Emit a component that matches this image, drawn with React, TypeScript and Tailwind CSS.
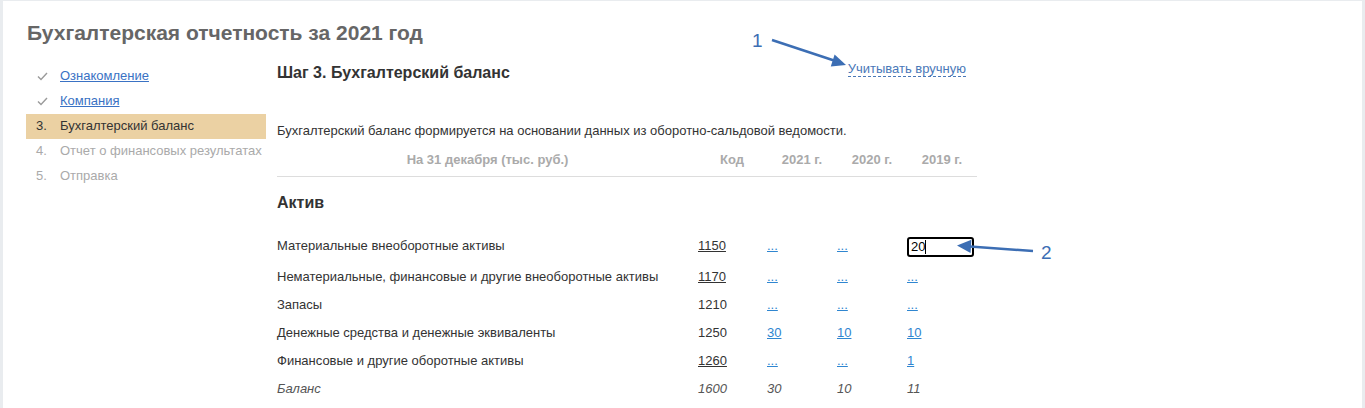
import React from "react";

const F = { fontFamily: '"Liberation Sans", Arial, Helvetica, sans-serif' };

function Check() {
  return (
    <svg width="11" height="9" viewBox="0 0 11 9" className="block">
      <polyline points="1,4.5 4,7.5 10,1" fill="none" stroke="#9a9a9a" strokeWidth="1.4" />
    </svg>
  );
}

type Cell = { t: string; link?: boolean; input?: boolean };
type Row = { label: string; code: string; codeU?: boolean; vals: Cell[]; italic?: boolean; h: string };

const rows: Row[] = [
  { label: "Материальные внеоборотные активы", code: "1150", codeU: true, vals: [{ t: "...", link: true }, { t: "...", link: true }, { t: "20", input: true }], h: "h-[34px]" },
  { label: "Нематериальные, финансовые и другие внеоборотные активы", code: "1170", codeU: true, vals: [{ t: "...", link: true }, { t: "...", link: true }, { t: "...", link: true }], h: "h-[28px]" },
  { label: "Запасы", code: "1210", vals: [{ t: "...", link: true }, { t: "...", link: true }, { t: "...", link: true }], h: "h-[28px]" },
  { label: "Денежные средства и денежные эквиваленты", code: "1250", vals: [{ t: "30", link: true }, { t: "10", link: true }, { t: "10", link: true }], h: "h-[28px]" },
  { label: "Финансовые и другие оборотные активы", code: "1260", codeU: true, vals: [{ t: "...", link: true }, { t: "...", link: true }, { t: "1", link: true }], h: "h-[28px]" },
  { label: "Баланс", code: "1600", vals: [{ t: "30" }, { t: "10" }, { t: "11" }], italic: true, h: "h-[28px]" },
];

export default function App() {
  return (
    <div className="relative w-[1365px] h-[408px] bg-[#e9ecef] pt-px pl-[3px] pr-[3px] overflow-hidden" style={F}>
      <div className="bg-white h-[407px] pl-[24px] pt-[20px]">
        <h1 className="text-[21px] leading-[24px] font-bold text-[#666666]">Бухгалтерская отчетность за 2021 год</h1>
        <div className="flex mt-[19px]">
          {/* sidebar */}
          <div className="w-[240px] text-[13px] ml-[-1px]">
            <div className="h-[25px] flex items-center pl-[11px] pb-px">
              <span className="w-[23px]"><Check /></span>
              <a className="text-[#3a72c4] underline">Ознакомление</a>
            </div>
            <div className="h-[25px] flex items-center pl-[11px] pb-px">
              <span className="w-[23px]"><Check /></span>
              <a className="text-[#3a72c4] underline">Компания</a>
            </div>
            <div className="h-[25px] flex items-center pl-[10px] pb-px bg-[#ebd1a3] text-[#333333]">
              <span className="w-[24px]">3.</span>
              <span>Бухгалтерский баланс</span>
            </div>
            <div className="h-[25px] flex items-center pl-[10px] pb-px text-[#aaaaaa]">
              <span className="w-[24px]">4.</span>
              <span>Отчет о финансовых результатах</span>
            </div>
            <div className="h-[25px] flex items-center pl-[10px] pb-px text-[#aaaaaa]">
              <span className="w-[24px]">5.</span>
              <span>Отправка</span>
            </div>
          </div>
          {/* main */}
          <div className="ml-[11px] w-[700px]">
            <div className="flex items-start justify-between pr-[11px]">
              <h2 className="text-[16px] leading-[18px] font-bold text-[#333333]">Шаг 3. Бухгалтерский баланс</h2>
              <a className="text-[13px] leading-[15px] text-[#4a78b8] border-b border-dashed border-[#4a78b8] -mt-[3px]">Учитывать вручную</a>
            </div>
            <p className="mt-[41px] text-[13px] leading-[16px] text-[#333333]">
              Бухгалтерский баланс формируется на основании данных из оборотно-сальдовой ведомости.
            </p>
            <div className="mt-[13px] flex text-[13px] leading-[16px] font-bold text-[#aaaaaa] border-b border-[#dddddd] pb-[8px]">
              <div className="w-[421px] text-center">На 31 декабря (тыс. руб.)</div>
              <div className="w-[69px] text-right pr-[23px]">Код</div>
              <div className="w-[70px] text-right pr-[15px]">2021 г.</div>
              <div className="w-[70px] text-right pr-[15px]">2020 г.</div>
              <div className="w-[70px] text-right pr-[15px]">2019 г.</div>
            </div>
            <div className="mt-[16px] text-[16px] leading-[20px] font-bold text-[#333333]">Актив</div>
            <div className="mt-[16px] text-[13px] text-[#333333]">
              {rows.map((r) => (
                <div key={r.code} className={`flex items-center ${r.h} ${r.italic ? "italic text-[#555555]" : ""}`}>
                  <div className="w-[421px]">{r.label}</div>
                  <div className={`w-[69px] ${r.codeU ? "underline" : ""}`}>{r.code}</div>
                  {r.vals.map((v, i) =>
                    v.input ? (
                      <div key={i} className="w-[70px]">
                        <div className="w-[67px] h-[20px] translate-y-[1px] border-2 border-black rounded-[3px] flex items-center pl-[2px] text-black">
                          <span>{v.t}</span>
                          <span className="inline-block w-px h-[14px] bg-black" />
                        </div>
                      </div>
                    ) : (
                      <div key={i} className="w-[70px]">
                        <span className={v.link ? "text-[#2f86d0] underline" : ""}>{v.t}</span>
                      </div>
                    )
                  )}
                </div>
              ))}
            </div>
          </div>
        </div>
      </div>
      {/* annotations */}
      <svg className="absolute left-0 top-0 pointer-events-none" width="1365" height="408">
        <text x="752" y="47" fontSize="19" fill="#3c6eb4" style={F}>1</text>
        <line x1="772" y1="40" x2="834" y2="60.5" stroke="#3c6eb4" strokeWidth="2.5" />
        <polygon points="846,65 830.8,66.6 834.6,54.6" fill="#3c6eb4" />
        <text x="1041" y="259" fontSize="19" fill="#3c6eb4" style={F}>2</text>
        <line x1="1033" y1="251" x2="970" y2="246.5" stroke="#3c6eb4" strokeWidth="2.5" />
        <polygon points="957,245.5 971.4,239.8 970.6,253" fill="#3c6eb4" />
      </svg>
    </div>
  );
}
